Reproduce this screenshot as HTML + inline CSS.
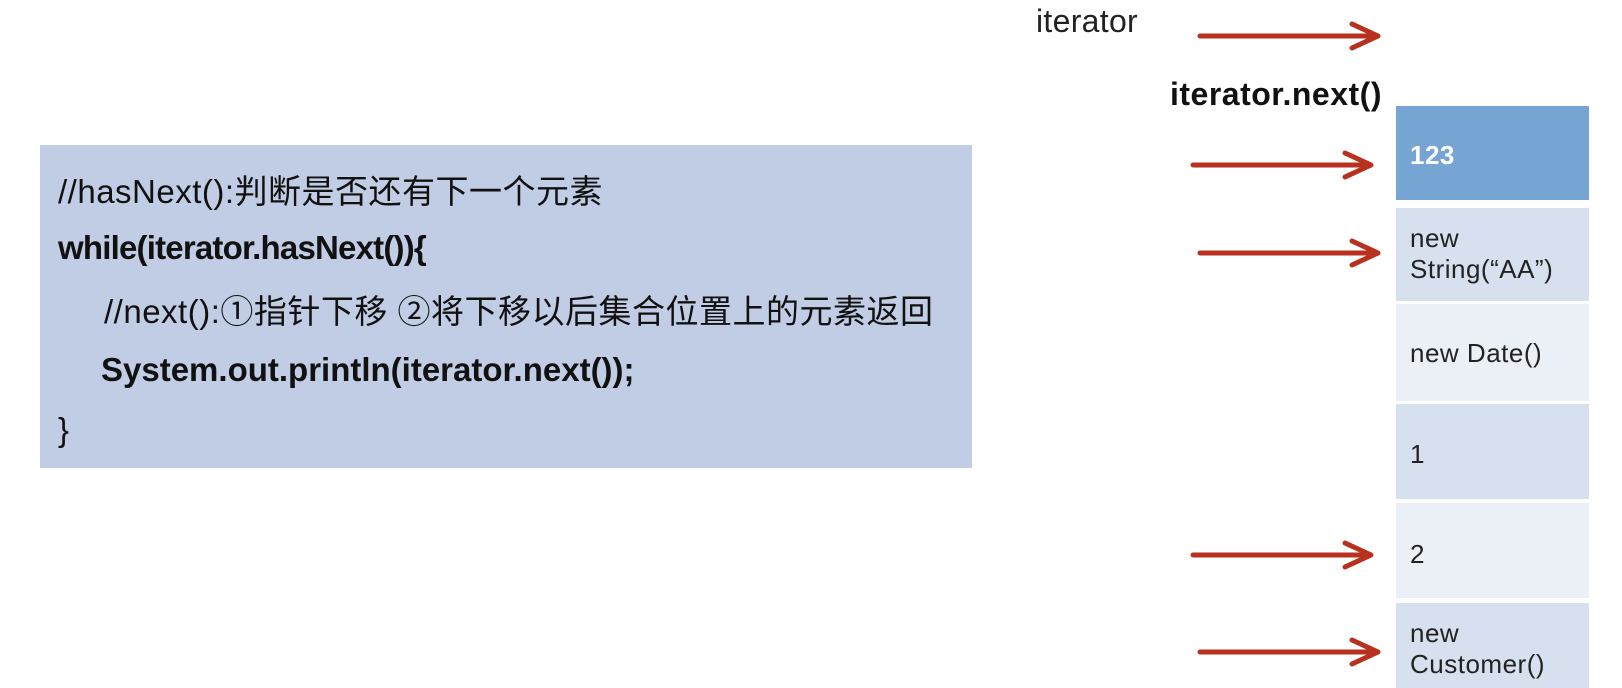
<!DOCTYPE html>
<html><head><meta charset="utf-8"><style>
*{margin:0;padding:0}
body{width:1622px;height:688px;background:#fff;position:relative;overflow:hidden;font-family:"Liberation Sans","Noto Sans CJK SC",sans-serif;color:#111}
.a{position:absolute;white-space:nowrap}
#box{position:absolute;left:40px;top:145px;width:932px;height:323px;background:#c0cde4}
.l{position:absolute;font-size:33px;letter-spacing:0.5px;line-height:36px;white-space:nowrap}
.c{position:absolute;left:1396px;width:193px;font-size:26px;line-height:32px;color:#222;letter-spacing:0.5px}
.c span{position:absolute;left:14px}
</style></head><body>
<div id="box">
<div class="l" style="left:18px;top:29px">//hasNext():判断是否还有下一个元素</div>
<div class="l" style="left:18px;top:85px;font-weight:bold;letter-spacing:-0.8px">while(iterator.hasNext()){</div>
<div class="l" style="left:64px;top:149px">//next():①指针下移 ②将下移以后集合位置上的元素返回</div>
<div class="l" style="left:61px;top:207px;font-weight:bold;letter-spacing:0px">System.out.println(iterator.next());</div>
<div class="l" style="left:18px;top:267px">}</div>
</div>
<div class="a" style="left:1036px;top:3px;font-size:32px;color:#222;letter-spacing:0.3px">iterator</div>
<div class="a" style="left:1170px;top:76px;font-size:32px;font-weight:bold;letter-spacing:0.5px">iterator.next()</div>

<div class="c" style="top:106px;height:94px;background:#76a5d3"><span style="top:33px;color:#fff;font-weight:bold">123</span></div>
<div class="c" style="top:208px;height:93px;background:#d6e0ee"><span style="top:15px;line-height:31px">new<br>String(“AA”)</span></div>
<div class="c" style="top:304px;height:97px;background:#ebeff6"><span style="top:33px">new Date()</span></div>
<div class="c" style="top:404px;height:95px;background:#d6e0ee"><span style="top:34px">1</span></div>
<div class="c" style="top:503px;height:95px;background:#ebeff6"><span style="top:35px">2</span></div>
<div class="c" style="top:603px;height:85px;background:#d6e0ee"><span style="top:15px;line-height:31px">new<br>Customer()</span></div>

<svg width="1622" height="688" style="position:absolute;left:0;top:0" fill="none" stroke="#b8311f" stroke-width="5" stroke-linecap="round" stroke-linejoin="round">
<g><path d="M1200 36H1376M1352 24L1378 36L1352 48"/></g>
<g><path d="M1193 165H1369M1345 153L1371 165L1345 177"/></g>
<g><path d="M1200 253H1376M1352 241L1378 253L1352 265"/></g>
<g><path d="M1193 555H1369M1345 543L1371 555L1345 567"/></g>
<g><path d="M1200 652H1376M1352 640L1378 652L1352 664"/></g>
</svg>
</body></html>
